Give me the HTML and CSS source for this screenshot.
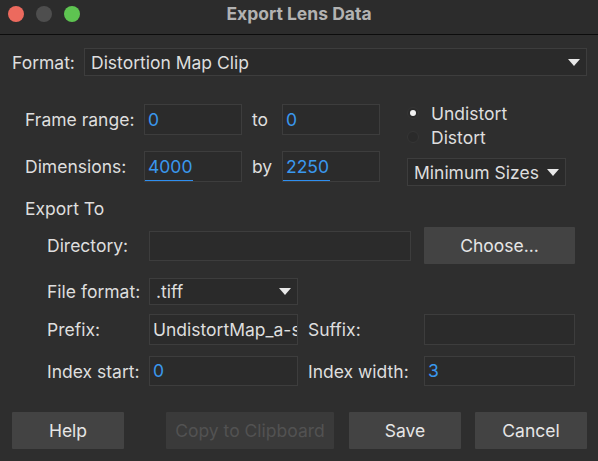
FILE: index.html
```html
<!DOCTYPE html>
<html>
<head>
<meta charset="utf-8">
<link rel="stylesheet" href="styles.css">
</head>
<body>
<div class="window">
  <div class="titlebar">
    <div class="lights">
      <span class="light red"></span>
      <span class="light grey"></span>
      <span class="light green"></span>
    </div>
    <div class="title">Export Lens Data</div>
  </div>
  <div class="content">
    <div class="format-row">
      <span class="label format-label">Format:</span>
      <div class="select format-select">
        <span>Distortion Map Clip</span>
        <span class="arrow"></span>
      </div>
    </div>

    <div class="range-block">
      <div class="range-grid">
        <span class="label">Frame range:</span>
        <div class="input"><span class="val">0</span></div>
        <span class="label sep">to</span>
        <div class="input"><span class="val">0</span></div>
        <span class="label">Dimensions:</span>
        <div class="input"><span class="val sel">4000</span></div>
        <span class="label sep">by</span>
        <div class="input"><span class="val sel">2250</span></div>
      </div>
      <div class="side-col">
        <div class="radio-row"><span class="radio on"></span><span class="label">Undistort</span></div>
        <div class="radio-row"><span class="radio"></span><span class="label">Distort</span></div>
        <div class="select size-select">
          <span>Minimum Sizes</span>
          <span class="arrow"></span>
        </div>
      </div>
    </div>

    <div class="section-title label">Export To</div>

    <div class="export">
      <div class="erow row-dir">
        <span class="label elabel">Directory:</span>
        <div class="input dir-input"></div>
        <button class="btn choose">Choose...</button>
      </div>
      <div class="erow row-ff">
        <span class="label elabel">File format:</span>
        <div class="select ff-select">
          <span>.tiff</span>
          <span class="arrow"></span>
        </div>
      </div>
      <div class="erow row-prefix">
        <span class="label elabel">Prefix:</span>
        <div class="input field"><span class="plain">UndistortMap_a-s</span></div>
        <span class="label side-label">Suffix:</span>
        <div class="input side-field"></div>
      </div>
      <div class="erow row-index">
        <span class="label elabel">Index start:</span>
        <div class="input field"><span class="val">0</span></div>
        <span class="label side-label">Index width:</span>
        <div class="input side-field"><span class="val">3</span></div>
      </div>
    </div>

    <div class="buttons">
      <button class="btn help">Help</button>
      <button class="btn copy" disabled>Copy to Clipboard</button>
      <button class="btn save">Save</button>
      <button class="btn cancel">Cancel</button>
    </div>
  </div>
</div>
</body>
</html>
```

FILE: styles.css
```css
* { box-sizing: border-box; }
html, body {
  margin: 0;
  padding: 0;
  background: #2c2c2c;
}
body {
  font-family: Inter, "Liberation Sans", sans-serif;
  font-size: 17.5px;
  color: #dedede;
}
.window {
  width: 598px;
  height: 461px;
  background: #2e2e2e;
  overflow: hidden;
}
.titlebar {
  height: 35px;
  background: #2c2c2c;
  border-bottom: 1px solid #0c0c0c;
  display: flex;
  align-items: center;
  position: relative;
}
.lights {
  display: flex;
  gap: 12px;
  padding-left: 8px;
  margin-top: -6px;
}
.light {
  width: 16px;
  height: 16px;
  border-radius: 50%;
  display: block;
}
.light.red { background: #ec6a5e; }
.light.grey { background: #4e4e4e; }
.light.green { background: #5ec451; }
.title {
  position: absolute;
  left: 0;
  right: 0;
  top: 3px;
  text-align: center;
  font-weight: 700;
  font-size: 17.5px;
  color: #b2b2b2;
}
.content {
  padding: 13px 11px 0 12px;
}
.label {
  color: #dedede;
  white-space: nowrap;
}
.format-row {
  display: flex;
  align-items: center;
  height: 28px;
}
.format-label {
  width: 72px;
  flex: none;
}
.select {
  display: flex;
  align-items: center;
  justify-content: space-between;
  border: 1px solid #3d3d3d;
  background: #2a2a2a;
  padding: 0 6px 0 6px;
  height: 28px;
  color: #dedede;
}
.format-select {
  flex: 1;
}
.arrow {
  width: 0;
  height: 0;
  border-left: 6px solid transparent;
  border-right: 6px solid transparent;
  border-top: 7px solid #e8e8e8;
}
.range-block {
  display: flex;
  margin-top: 28px;
  padding-left: 13px;
}
.range-grid {
  display: grid;
  grid-template-columns: 119px 98px 40px 98px;
  grid-auto-rows: 31px;
  row-gap: 16px;
  align-items: center;
}
.sep {
  padding-left: 10px;
}
.input {
  height: 31px;
  border: 1px solid #3d3d3d;
  background: #2b2b2b;
  display: flex;
  align-items: center;
  padding-left: 3px;
  overflow: hidden;
}
.val {
  color: #3a98ee;
  position: relative;
  line-height: 26px;
}
.val.sel::after {
  content: "";
  position: absolute;
  left: -3px;
  right: -1px;
  bottom: -3px;
  height: 3px;
  background: #2f8ff0;
}
.plain {
  color: #dedede;
  white-space: nowrap;
}
.side-col {
  margin-left: 27px;
  display: flex;
  flex-direction: column;
}
.radio-row {
  display: flex;
  align-items: center;
  height: 24px;
  gap: 12px;
}
.radio-row:first-child { margin-top: -3px; }
.radio {
  width: 12px;
  height: 12px;
  border-radius: 50%;
  background: #2a2a2a;
  border: 1px solid #353535;
  position: relative;
}
.radio.on::after {
  content: "";
  position: absolute;
  left: 2px;
  top: 2px;
  width: 6px;
  height: 6px;
  border-radius: 50%;
  background: #f2f2f2;
}
.size-select {
  margin-top: 9px;
  width: 159px;
  height: 28px;
  padding-right: 6px;
}
.section-title {
  margin-top: 13px;
  padding-left: 13px;
  height: 20px;
  line-height: 20px;
}
.export {
  padding-left: 35px;
  margin-top: 8px;
}
.erow {
  display: flex;
  align-items: center;
}
.elabel {
  width: 102px;
  flex: none;
}
.row-dir { height: 37px; }
.row-ff { height: 27px; margin-top: 14px; }
.row-prefix { height: 31px; margin-top: 9px; }
.row-index { height: 30px; margin-top: 11px; }
.row-index .input { height: 30px; }
.dir-input {
  width: 262px;
  height: 30px;
}
.choose {
  margin-left: 13px;
  width: 151px;
  height: 37px;
}
.ff-select {
  width: 149px;
  height: 27px;
}
.field {
  width: 149px;
}
.side-label {
  width: 126px;
  padding-left: 10px;
}
.side-field {
  width: 151px;
}
.btn {
  font-family: inherit;
  font-size: 17.5px;
  color: #e6e6e6;
  background: #434343;
  border: none;
  border-radius: 1px;
  padding: 0;
}
.buttons {
  display: flex;
  margin-top: 26px;
}
.buttons .btn {
  height: 37px;
  width: 112px;
  flex: none;
}
.buttons .copy {
  margin-left: 42px;
  width: 168px;
  background: #3a3a3a;
  color: #525252;
}
.buttons .save {
  margin-left: 15px;
}
.buttons .cancel {
  margin-left: 14px;
}
```
